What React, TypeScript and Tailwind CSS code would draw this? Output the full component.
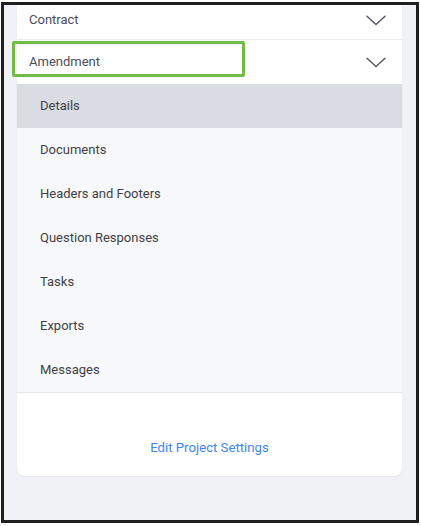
const SUB_ITEMS = [
  'Details',
  'Documents',
  'Headers and Footers',
  'Question Responses',
  'Tasks',
  'Exports',
  'Messages',
];

function Chevron() {
  return (
    <svg width="20" height="11" viewBox="0 0 20 11" fill="none" className="text-[#555560]">
      <path d="M1 1.2 L10 9.6 L19 1.2" stroke="currentColor" strokeWidth="1.4" strokeLinecap="round" strokeLinejoin="round" />
    </svg>
  );
}

export default function App() {
  return (
    <div className="w-[421px] h-[526px] bg-white font-['Roboto',sans-serif] pt-[2px] pl-[1px]">
      <div className="w-[418px] h-[521px] border-[3px] border-[#1f1f1f] bg-[#f1f2f6] overflow-hidden">
        <div className="ml-[13px] w-[385px] bg-white rounded-b-lg shadow-[0_1px_2px_rgba(0,0,0,0.06)]">
          {/* Contract */}
          <div className="h-[35px] flex items-center justify-between pl-[12px] pr-[16px] border-b border-[#ececf0] pb-[4px]">
            <span className="text-[13px] text-[#4b4b5c]">Contract</span>
            <Chevron />
          </div>
          {/* Amendment */}
          <div className="relative h-[44px] flex items-center justify-between pl-[12px] pr-[16px]">
            <span className="text-[13px] text-[#4b4b5c]">Amendment</span>
            <Chevron />
            <div className="absolute left-[-5px] top-[1px] w-[233px] h-[36px] border-[3px] border-[#72bb48] rounded-[2px]" />
          </div>
          {/* Sub menu */}
          <div className="bg-[#f7f8fa] border-b border-[#e6e7ea]">
            {SUB_ITEMS.map((item, i) => (
              <div
                key={item}
                className={
                  i === 0
                    ? 'h-11 flex items-center pl-[23px] bg-[#d9dde3] text-[13px] text-[#3f3f46]'
                    : 'h-11 flex items-center pl-[23px] text-[13px] text-[#3f3f46]'
                }
              >
                {item}
              </div>
            ))}
          </div>
          {/* Footer */}
          <div className="h-[83px] flex items-end justify-center pb-[20px]">
            <span className="text-[13.2px] leading-4 text-[#3d86f2]">Edit Project Settings</span>
          </div>
        </div>
      </div>
    </div>
  );
}
